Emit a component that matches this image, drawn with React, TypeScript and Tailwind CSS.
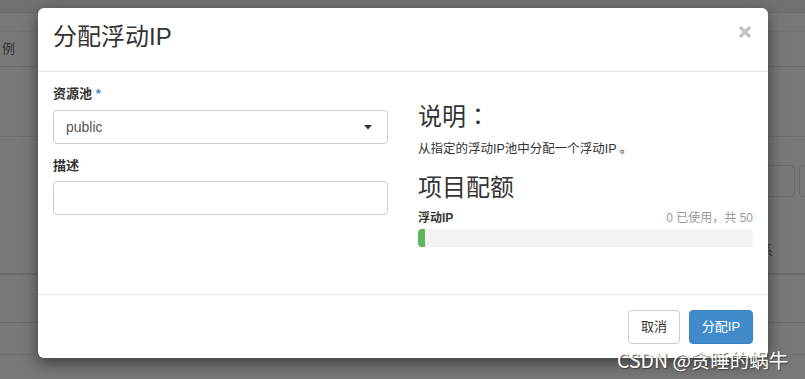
import React from "react";

const font = "font-['Liberation_Sans','Noto_Sans_CJK_SC',sans-serif]";

function Background() {
  return (
    <div className="flex h-[379px] w-[805px] flex-col bg-[#787878]">
      <div className="h-[13px] border-b border-[#6a6a6a] bg-[#717171]" />
      <div className="h-[19px] border-b border-[#737373]" />
      <div className="flex h-[35px] items-center border-b border-[#6a6a6a] pl-[2px] text-[13px] text-[#333]">
        例
      </div>
      <div className="h-[70px] border-b border-[#6e6e6e]" />
      <div className="relative h-[138px] border-b-2 border-[#6a6a6a]">
        <div className="absolute left-[740px] top-[28px] h-[32px] w-[55px] rounded-[4px] border border-[#6a6a6a]" />
        <div className="absolute left-[799px] top-[28px] h-[32px] w-[20px] rounded-[4px] border border-[#6a6a6a]" />
        <div className="absolute left-[760px] top-[106px] text-[13px] leading-[16px] text-[#333]">系</div>
      </div>
      <div className="h-[48px] border-b border-[#6a6a6a]" />
      <div className="h-[32px] border-b border-[#6e6e6e]" />
      <div className="flex-1" />
    </div>
  );
}

export default function App() {
  return (
    <div className={`relative h-[379px] w-[805px] overflow-hidden ${font}`}>
      <Background />
      <div className="absolute left-[38px] top-[8px] w-[730px] rounded-[6px] bg-white shadow-[0_5px_15px_rgba(0,0,0,0.5)]">
        {/* header */}
        <div className="flex h-[64px] items-start justify-between border-b border-[#e5e5e5] px-[15px] pt-[16px]">
          <div className="text-[24px] leading-[26px] text-[#333]">分配浮动IP</div>
          <svg width="14" height="14" viewBox="0 0 14 14" className="mr-[1px] mt-[1px]">
            <path d="M2 2 L12 12 M12 2 L2 12" stroke="#c4c4c4" strokeWidth="3.4" strokeLinecap="butt" />
          </svg>
        </div>
        {/* body */}
        <div className="grid h-[222px] grid-cols-2 gap-[30px] px-[15px] pt-[13px]">
          <div className="flex flex-col">
            <div className="text-[13px] font-bold leading-[18px] text-[#333]">
              资源池 <span className="text-[#428bca]">*</span>
            </div>
            <div className="mt-[7px] flex h-[34px] items-center justify-between rounded-[4px] border border-[#ccc] pl-[12px] pr-[15px] text-[14px] text-[#555]">
              <span>public</span>
              <svg width="8" height="5" viewBox="0 0 8 5">
                <path d="M0 0 L8 0 L4 4.5 Z" fill="#333" />
              </svg>
            </div>
            <div className="mt-[13px] text-[13px] font-bold leading-[18px] text-[#333]">描述</div>
            <div className="mt-[6px] h-[34px] rounded-[4px] border border-[#ccc]" />
          </div>
          <div className="flex flex-col">
            <div className="mt-[17px] text-[24px] leading-[26px] text-[#333]">
              说明<span className="font-['Noto_Sans_CJK_JP',sans-serif]">：</span>
            </div>
            <div className="mt-[11px] text-[12.5px] leading-[17px] text-[#333]">从指定的浮动IP池中分配一个浮动IP 。</div>
            <div className="mt-[17px] text-[24px] leading-[26px] text-[#333]">项目配额</div>
            <div className="mt-[9px] flex items-center justify-between text-[12px] leading-[17px]">
              <span className="font-bold text-[#333]">浮动IP</span>
              <span className="text-[#999]">0 已使用，共 50</span>
            </div>
            <div className="mt-[2px] flex h-[18px] overflow-hidden rounded-[4px] bg-[#f3f3f3]">
              <div className="h-full w-[7px] bg-[#5cb85c]" />
            </div>
          </div>
        </div>
        {/* footer */}
        <div className="flex h-[64px] items-start justify-end gap-[9px] border-t border-[#e5e5e5] px-[15px] pt-[15px]">
          <div className="flex h-[34px] w-[52px] items-center justify-center rounded-[4px] border border-[#ccc] bg-white text-[13px] text-[#333]">
            取消
          </div>
          <div className="flex h-[34px] w-[64px] items-center justify-center rounded-[4px] border border-[#3a84c4] bg-[#428bca] text-[13px] text-white">
            分配IP
          </div>
        </div>
      </div>
      <div className="absolute left-[617px] top-[347px] font-['Noto_Sans_CJK_SC',sans-serif] text-[19.5px] leading-[26px] text-white [text-shadow:1px_1px_1px_rgba(60,60,60,0.9)]">
        CSDN @贪睡的蜗牛
      </div>
    </div>
  );
}
